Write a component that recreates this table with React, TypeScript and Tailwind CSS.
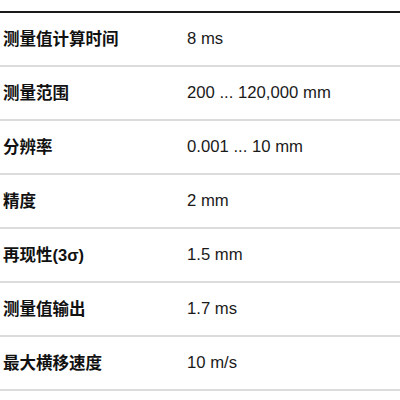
import React from "react";

const rows: [string, string][] = [
  ["测量值计算时间", "8 ms"],
  ["测量范围", "200 ... 120,000 mm"],
  ["分辨率", "0.001 ... 10 mm"],
  ["精度", "2 mm"],
  ["再现性(3σ)", "1.5 mm"],
  ["测量值输出", "1.7 ms"],
  ["最大横移速度", "10 m/s"],
];

export default function App() {
  return (
    <div className="w-[400px] h-[400px] bg-white pt-[11px]" style={{ fontFamily: '"Liberation Sans", "Noto Sans CJK SC", sans-serif' }}>
      <div className="border-t-2 border-[#1a1a1a]">
        {rows.map(([k, v]) => (
          <div key={k} className="flex h-[54px] items-center border-b-2 border-[#dcdcdc] text-[#111]">
            <div className="w-[187px] pl-[3px] text-[16.5px] font-bold">{k}</div>
            <div className="text-[16.7px] text-[#1a1a1a]">{v}</div>
          </div>
        ))}
      </div>
    </div>
  );
}
